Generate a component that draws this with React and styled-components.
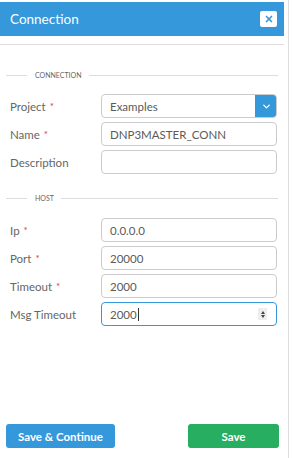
import styled, { createGlobalStyle } from "styled-components";
import { X, ChevronDown } from "lucide-react";

const Global = createGlobalStyle`
  html, body {
    margin: 0;
    padding: 0;
    background: #fff;
    font-family: Lato, "Open Sans", sans-serif;
  }
  * { box-sizing: border-box; }
`;

const Page = styled.div`
  display: flex;
  height: 458px;
`;

const Panel = styled.div`
  width: 284px;
  display: flex;
  flex-direction: column;
`;

const Edge = styled.div`
  margin-left: 4px;
  width: 1px;
  background: #ddd;
`;

const HeaderWrap = styled.div`
  padding-top: 2px;
  padding-bottom: 8px;
  border-bottom: 1px solid #ddd;
`;

const Header = styled.div`
  height: 34px;
  background: #3498db;
  display: flex;
  align-items: center;
  justify-content: space-between;
  padding: 0 7px 0 10px;
`;

const Title = styled.h1`
  margin: 0;
  font-size: 13.5px;
  font-weight: 400;
  color: #fff;
`;

const CloseBtn = styled.button`
  width: 17px;
  height: 16px;
  border: none;
  border-radius: 2px;
  background: #fff;
  color: #3498db;
  display: flex;
  align-items: center;
  justify-content: center;
  padding: 0;
`;

const Legend = styled.div`
  display: flex;
  align-items: center;
  gap: 7px;
  height: 10px;
  margin-top: ${p => p.$top}px;
  padding: 0 6px;
  font-size: 7px;
  color: #666;
  text-transform: uppercase;
  &::before {
    content: "";
    width: 21px;
    height: 1px;
    background: #ddd;
    margin-right: 1px;
  }
  &::after {
    content: "";
    flex: 1;
    height: 1px;
    background: #ddd;
  }
`;

const Rows = styled.div`
  display: flex;
  flex-direction: column;
  gap: 4px;
  margin-top: ${p => p.$top}px;
  padding: 0 7px 0 10px;
`;

const Row = styled.div`
  display: grid;
  grid-template-columns: 91px 176px;
  align-items: center;
  height: 24px;
`;

const Label = styled.label`
  font-size: 11.5px;
  color: #666;
`;

const Req = styled.span`
  color: #e53935;
  font-size: 10px;
  margin-left: 4px;
  vertical-align: top;
`;

const Field = styled.div`
  position: relative;
  height: 24px;
  border: 1px solid ${p => (p.$focus ? "#3498db" : "#ccc")};
  border-radius: 4px;
  display: flex;
  align-items: center;
  padding-left: 8px;
  font-size: 11.5px;
  color: #5a5a5a;
  overflow: hidden;
`;

const Caret = styled.span`
  display: inline-block;
  width: 1px;
  height: 13px;
  background: #333;
  margin-left: 1px;
`;

const DropBtn = styled.div`
  margin-left: auto;
  width: 22px;
  height: 24px;
  margin-right: -1px;
  background: #3498db;
  color: #fff;
  display: flex;
  align-items: center;
  justify-content: center;
`;

const Spinner = styled.div`
  position: absolute;
  right: 9px;
  top: 5px;
  width: 9px;
  height: 12px;
  background: #eee;
  display: flex;
  flex-direction: column;
  align-items: center;
  justify-content: center;
  gap: 1px;
  &::before, &::after {
    content: "";
    border-left: 2.5px solid transparent;
    border-right: 2.5px solid transparent;
  }
  &::before { border-bottom: 3px solid #444; }
  &::after { border-top: 3px solid #444; }
`;

const Footer = styled.div`
  margin-top: auto;
  padding: 0 5px 10px 6px;
  display: flex;
  justify-content: space-between;
`;

const Button = styled.button`
  height: 24px;
  width: ${p => p.$w}px;
  border: none;
  border-radius: 3px;
  background: ${p => p.$bg};
  color: #fff;
  font-family: inherit;
  font-size: 11.5px;
  font-weight: 700;
  padding: 0;
`;

function FormRow({ label, required, children, ...rest }) {
  return (
    <Row>
      <Label>
        {label}
        {required && <Req>*</Req>}
      </Label>
      <Field {...rest}>{children}</Field>
    </Row>
  );
}

export default function App() {
  return (
    <Page>
      <Global />
      <Panel>
        <HeaderWrap>
          <Header>
            <Title>Connection</Title>
            <CloseBtn><X size={10} strokeWidth={4} /></CloseBtn>
          </Header>
        </HeaderWrap>

        <Legend $top={25}>Connection</Legend>
        <Rows $top={14}>
          <FormRow label="Project" required>
            Examples
            <DropBtn><ChevronDown size={11} strokeWidth={3} /></DropBtn>
          </FormRow>
          <FormRow label="Name" required>DNP3MASTER_CONN</FormRow>
          <FormRow label="Description" />
        </Rows>

        <Legend $top={19}>Host</Legend>
        <Rows $top={15}>
          <FormRow label="Ip" required>0.0.0.0</FormRow>
          <FormRow label="Port" required>20000</FormRow>
          <FormRow label="Timeout" required>2000</FormRow>
          <FormRow label="Msg Timeout" $focus>
            2000<Caret />
            <Spinner />
          </FormRow>
        </Rows>

        <Footer>
          <Button $w={109} $bg="#3498db">Save &amp; Continue</Button>
          <Button $w={91} $bg="#27ae60">Save</Button>
        </Footer>
      </Panel>
      <Edge />
    </Page>
  );
}
